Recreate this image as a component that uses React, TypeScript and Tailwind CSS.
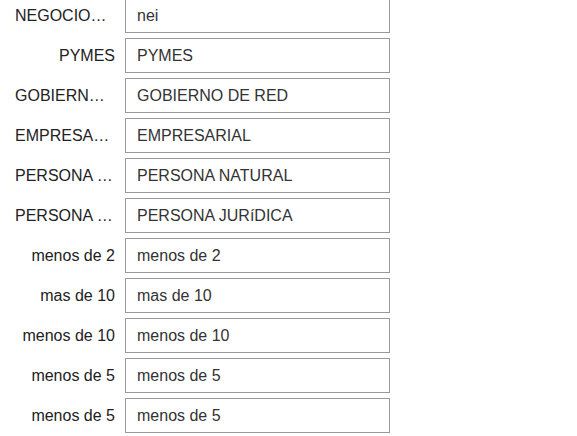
const rows: [string, string][] = [
  ['NEGOCIOS INDEPENDIENTES', 'nei'],
  ['PYMES', 'PYMES'],
  ['GOBIERNO DE RED', 'GOBIERNO DE RED'],
  ['EMPRESARIAL', 'EMPRESARIAL'],
  ['PERSONA NATURAL', 'PERSONA NATURAL'],
  ['PERSONA JURíDICA', 'PERSONA JURíDICA'],
  ['menos de 2', 'menos de 2'],
  ['mas de 10', 'mas de 10'],
  ['menos de 10', 'menos de 10'],
  ['menos de 5', 'menos de 5'],
  ['menos de 5', 'menos de 5'],
];

export default function App() {
  return (
    <div className="mt-[-2px] flex flex-col gap-[5px] pl-[15px] font-['Liberation_Sans',Arial,sans-serif] text-[16px]">
      {rows.map(([label, value], i) => (
        <div key={i} className="flex items-center gap-[10px]">
          <label className="w-[100px] truncate text-right text-[#222]">{label}</label>
          <input
            readOnly
            defaultValue={value}
            className="h-[35px] w-[265px] border border-[#999] bg-white px-[11px] text-[#333] outline-none"
          />
        </div>
      ))}
    </div>
  );
}
